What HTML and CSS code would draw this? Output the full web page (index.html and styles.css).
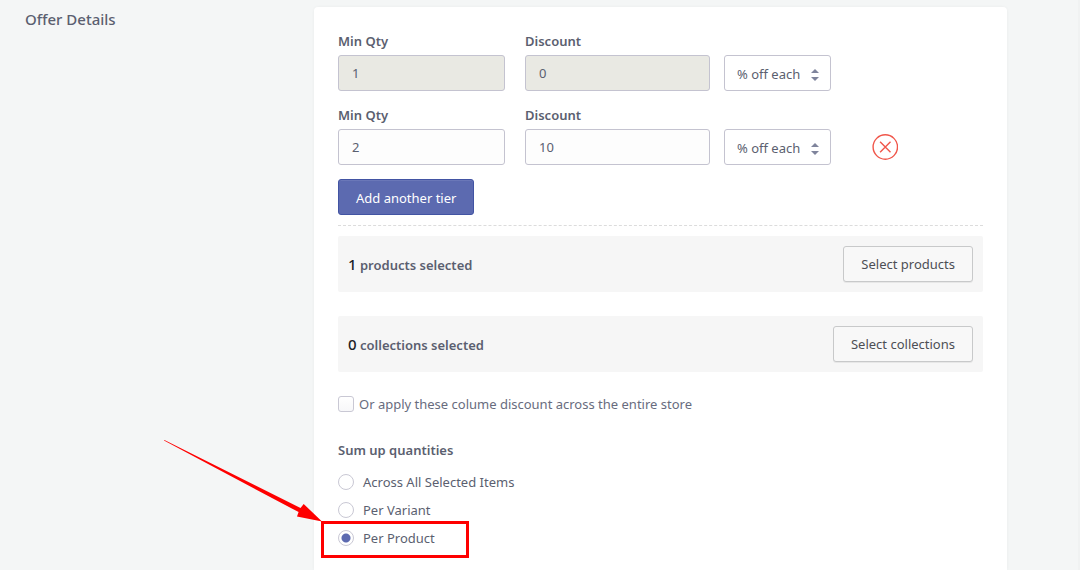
FILE: index.html
```html
<!DOCTYPE html>
<html lang="en">
<head>
<meta charset="utf-8">
<meta name="viewport" content="width=device-width, initial-scale=1">
<title>Offer Details</title>
<link rel="stylesheet" href="styles.css">
</head>
<body>
<main class="page">
  <h1 class="page-title">Offer Details</h1>
  <form class="card">
    <div class="tiers">
      <div class="tier">
        <div class="field">
          <label for="qty1">Min Qty</label>
          <input class="text-input" id="qty1" type="text" value="1" disabled>
        </div>
        <div class="field">
          <label for="disc1">Discount</label>
          <input class="text-input" id="disc1" type="text" value="0" disabled>
        </div>
        <div class="select-wrap">
          <select class="select" aria-label="Discount type for tier 1"><option>% off each</option></select>
          <svg class="select-arrows" viewBox="0 0 8 12" aria-hidden="true"><path d="M0 4L4 0l4 4zM0 8h8l-4 4z"/></svg>
        </div>
      </div>
      <div class="tier">
        <div class="field">
          <label for="qty2">Min Qty</label>
          <input class="text-input" id="qty2" type="text" value="2">
        </div>
        <div class="field">
          <label for="disc2">Discount</label>
          <input class="text-input" id="disc2" type="text" value="10">
        </div>
        <div class="select-wrap">
          <select class="select" aria-label="Discount type for tier 2"><option>% off each</option></select>
          <svg class="select-arrows" viewBox="0 0 8 12" aria-hidden="true"><path d="M0 4L4 0l4 4zM0 8h8l-4 4z"/></svg>
        </div>
        <button class="remove" type="button" aria-label="Remove tier">
          <svg viewBox="0 0 26 26" aria-hidden="true"><circle cx="13.3" cy="13" r="12.2"/><path d="M8.1 7.8l10.4 10.4M18.5 7.8L8.1 18.2"/></svg>
        </button>
      </div>
      <button class="button button-primary" type="button">Add another tier</button>
    </div>

    <div class="selection">
      <p class="selection-text"><span class="count">1</span> products selected</p>
      <button class="button" type="button">Select products</button>
    </div>
    <div class="selection">
      <p class="selection-text"><span class="count">0</span> collections selected</p>
      <button class="button" type="button">Select collections</button>
    </div>

    <label class="check"><input class="checkbox" type="checkbox">Or apply these colume discount across the entire store</label>

    <fieldset class="options">
      <legend>Sum up quantities</legend>
      <label class="option"><input class="radio" type="radio" name="sum">Across All Selected Items</label>
      <label class="option"><input class="radio" type="radio" name="sum">Per Variant</label>
      <div class="marked">
        <label class="option"><input class="radio" type="radio" name="sum" checked>Per Product</label>
        <span class="highlight"></span>
        <svg class="pointer" viewBox="0 0 158 82" aria-hidden="true"><path d="M0 0.6L0.4 0L136.5 68l3.2-4L158 81.5l-25-5 1.6-4.4z"/></svg>
      </div>
    </fieldset>
  </form>
</main>
</body>
</html>
```
FILE: styles.css
```css
* {
  box-sizing: border-box;
}

body {
  margin: 0;
  background: #f4f6f6;
  color: #5b5f70;
  font: 13px/20px "Noto Sans", "Open Sans", sans-serif;
}

input,
select,
button {
  color: inherit;
  font: inherit;
}

.page {
  display: grid;
  grid-template-columns: 289px 1fr;
  min-height: 100vh;
  padding: 7px 71px 0 25px;
  border-right: 2px solid #f0f2f2;
}

.page-title {
  margin: 2px 0 0;
  font-size: 15px;
  font-weight: 500;
  line-height: 20px;
}

.card {
  padding: 24px 24px 18px;
  background: #fff;
  border-radius: 4px 4px 0 0;
  box-shadow: 0 0 3px rgba(60, 80, 80, 0.06);
}

.tiers {
  display: grid;
  gap: 14px;
  justify-items: start;
  padding-bottom: 10px;
  border-bottom: 1px dashed #dcdcdc;
}

.tier {
  display: grid;
  grid-template-columns: 187fr 199fr 148fr 111fr;
  align-items: end;
  width: 100%;
}

.field {
  display: grid;
  gap: 4px;
  margin-right: 20px;
  font-weight: 600;
}

.field + .field {
  margin-right: 14px;
}

.text-input {
  width: 100%;
  height: 36px;
  padding: 0 13px;
  background: #fdfdfd;
  border: 1px solid #c4c3d0;
  border-radius: 3px;
  font-weight: 400;
}

.text-input:disabled {
  background: #e9e9e3;
}

.select-wrap {
  position: relative;
  width: 107px;
}

.select {
  appearance: none;
  display: block;
  width: 100%;
  height: 36px;
  padding: 2px 28px 0 12px;
  background: #fff;
  border: 1px solid #c4c3d0;
  border-radius: 3px;
}

.select-arrows {
  position: absolute;
  top: 14px;
  right: 12px;
  width: 8px;
  height: 12px;
  fill: #7f849c;
  pointer-events: none;
}

.remove {
  width: 27px;
  height: 26px;
  margin-bottom: 5px;
  padding: 0;
  background: none;
  border: 0;
}

.remove svg {
  display: block;
  height: 26px;
  fill: none;
  stroke: #f0564a;
  stroke-width: 1.4;
}

.button {
  height: 36px;
  padding: 0 17px;
  background: #f8f8f8;
  border: 1px solid #c8c9ca;
  border-radius: 3px;
  box-shadow: 0 1px 0 rgba(0, 0, 0, 0.06);
  color: #4d4f55;
}

.button-primary {
  padding: 2px 17px 0;
  background: #5c6ab0;
  border-color: #4254a3;
  box-shadow: inset 0 1px 0 #6a77b8;
  color: #fff;
}

.selection {
  display: flex;
  align-items: center;
  justify-content: space-between;
  margin-top: 24px;
  padding: 10px;
  background: #f6f6f6;
  border-radius: 2px;
}

.tiers + .selection {
  margin-top: 10px;
}

.selection-text {
  margin: 0;
  font-weight: 600;
}

.count {
  color: #212226;
  font-size: 15px;
  font-weight: 500;
}

.check,
.option {
  display: flex;
  align-items: center;
}

.check {
  gap: 5px;
  margin-top: 22px;
  color: #686c7e;
}

.checkbox,
.radio {
  appearance: none;
  flex: none;
  width: 16px;
  height: 16px;
  margin: 0;
  background: #fff;
  border: 1px solid #c9c8d4;
}

.checkbox {
  background: linear-gradient(#fff, #f7f7f9);
  border-radius: 3px;
}

.radio {
  border-radius: 50%;
}

.radio:checked {
  background: radial-gradient(circle, #5c6ab0 4px, #fff 5px);
}

.options {
  margin: 26px 0 0;
  padding: 0;
  border: 0;
}

.options legend {
  margin-bottom: 8px;
  padding: 0;
  font-weight: 600;
}

.option {
  gap: 9px;
  line-height: 28px;
}

.marked {
  position: relative;
}

.highlight {
  position: absolute;
  top: -3px;
  left: -17px;
  width: 148px;
  height: 37px;
  border: 3px solid #fe0000;
  pointer-events: none;
}

.pointer {
  position: absolute;
  top: -84px;
  left: -174px;
  width: 158px;
  height: 82px;
  fill: #fe0000;
  pointer-events: none;
}
```
